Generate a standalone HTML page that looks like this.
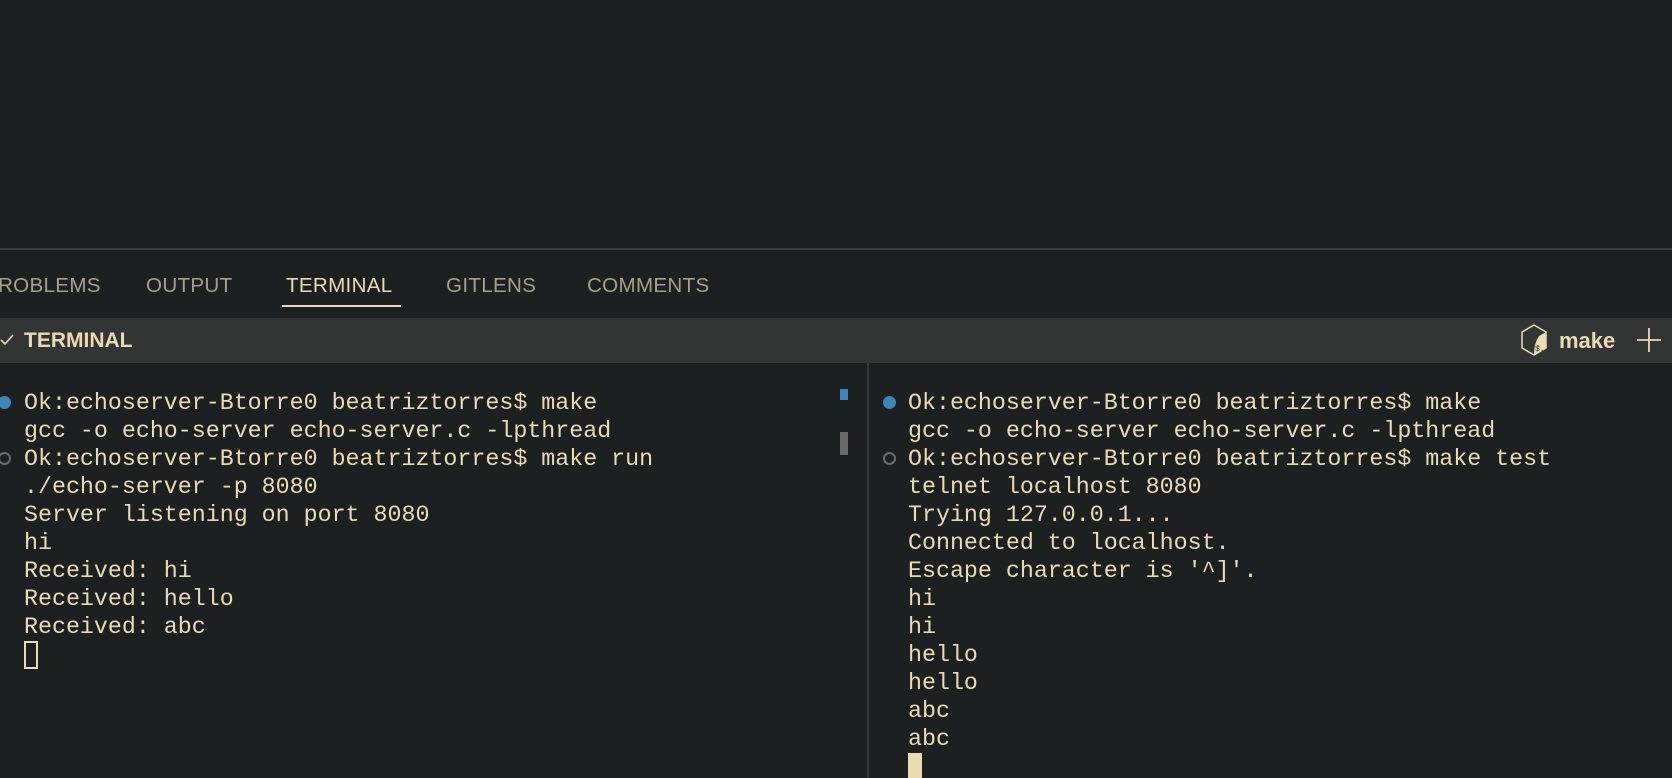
<!DOCTYPE html>
<html><head><style>
html,body{margin:0;padding:0;width:1672px;height:778px;overflow:hidden;background:#1d2021;}
body{position:relative;font-family:"Liberation Sans",sans-serif;}
.top{position:absolute;left:0;top:0;width:1672px;height:248px;background:#1d2021;border-bottom:2px solid #3a3a3a;}
.tab{position:absolute;top:274px;font-size:20.6px;color:#a89f88;letter-spacing:0.3px;}
.tab.act{color:#ebdbb2;}
.ul{position:absolute;left:282px;top:305px;width:119px;height:2px;background:#ebdbb2;}
.hdr{position:absolute;left:0;top:318px;width:1672px;height:45px;background:#333434;}
.hdr .t{position:absolute;left:24px;top:11px;font-weight:bold;font-size:21px;color:#ebdbb2;}
.hdr .m{position:absolute;top:10px;font-weight:bold;font-size:22px;color:#ebdbb2;}
.term{position:absolute;font-family:"Liberation Mono",monospace;font-size:23.3px;line-height:28px;color:#ebdbb2;white-space:pre;}
.dot{position:absolute;width:13px;height:13px;border-radius:50%;}
.b{background:#3d85b8;}
.o{border:2px solid #6b6b6b;width:9px;height:9px;}
.div{position:absolute;left:867px;top:363px;width:2px;height:415px;background:#363738;}
</style></head><body>
<div class="top"></div>
<div class="tab" style="left:-2px">ROBLEMS</div>
<div class="tab" style="left:146px">OUTPUT</div>
<div class="tab act" style="left:286px">TERMINAL</div>
<div class="tab" style="left:446px">GITLENS</div>
<div class="tab" style="left:587px">COMMENTS</div>
<div class="ul"></div>
<div class="hdr">
<svg style="position:absolute;left:0;top:14px" width="16" height="16" viewBox="0 0 16 16"><path d="M1 8 L5 12 L13 3" stroke="#ebdbb2" stroke-width="1.6" fill="none"/></svg>
<div class="t">TERMINAL</div>
<svg style="position:absolute;left:1519px;top:5px" width="30" height="34" viewBox="0 0 30 34"><path d="M15 2 L27 9 L27 25 L15 32 L3 25 L3 9 Z" fill="none" stroke="#ebdbb2" stroke-width="1.5"/><path d="M15 32 L27 25 L27 9 L20 13 Q15 20 15 32 Z" fill="#ebdbb2"/><text x="16" y="28" font-size="8" fill="#333" font-family="Liberation Mono">$.</text></svg>
<div class="m" style="left:1559px">make</div>
<svg style="position:absolute;left:1636px;top:9px" width="26" height="26" viewBox="0 0 26 26"><path d="M13 1 V25 M1 13 H25" stroke="#ebdbb2" stroke-width="1.8"/></svg>
</div>
<div class="div"></div>
<div style="position:absolute;left:840px;top:389px;width:8px;height:11px;background:#3d85b8"></div>
<div style="position:absolute;left:840px;top:432px;width:8px;height:23px;background:#6a6a6a"></div>
<div class="dot b" style="left:-2px;top:396px"></div>
<div class="dot o" style="left:-2px;top:452px"></div>
<div class="term" style="left:24px;top:389px">Ok:echoserver-Btorre0 beatriztorres$ make
gcc -o echo-server echo-server.c -lpthread
Ok:echoserver-Btorre0 beatriztorres$ make run
./echo-server -p 8080
Server listening on port 8080
hi
Received: hi
Received: hello
Received: abc</div>
<div style="position:absolute;left:24px;top:641px;width:10px;height:24px;border:2px solid #ebdbb2"></div>
<div class="dot b" style="left:883px;top:396px"></div>
<div class="dot o" style="left:883px;top:452px"></div>
<div class="term" style="left:908px;top:389px">Ok:echoserver-Btorre0 beatriztorres$ make
gcc -o echo-server echo-server.c -lpthread
Ok:echoserver-Btorre0 beatriztorres$ make test
telnet localhost 8080
Trying 127.0.0.1...
Connected to localhost.
Escape character is '^]'.
hi
hi
hello
hello
abc
abc</div>
<div style="position:absolute;left:908px;top:753px;width:14px;height:25px;background:#ebdbb2"></div>
</body></html>
